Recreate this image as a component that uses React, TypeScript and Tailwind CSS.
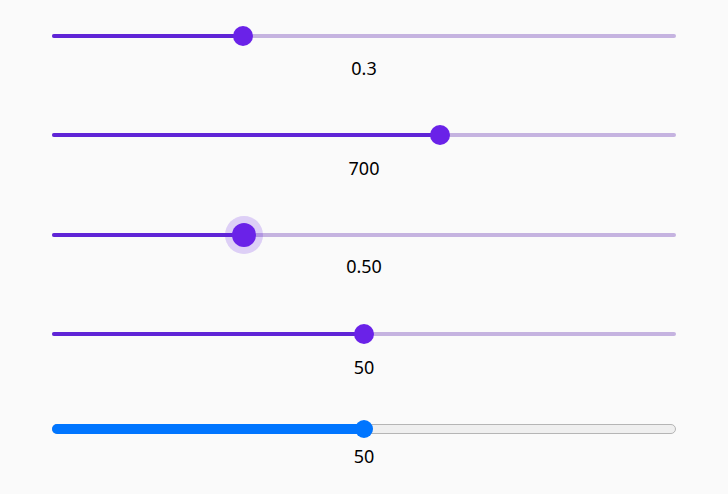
import React from "react";

type SliderProps = {
  pct: number; // 0..1
  thumb: number;
  halo?: boolean;
};

// purple material-like slider
function PurpleSlider({ pct, thumb, halo }: SliderProps) {
  const left = `calc(${thumb / 2}px + (100% - ${thumb}px) * ${pct})`;
  return (
    <div className="relative h-6 w-full">
      <div className="absolute left-0 right-0 top-1/2 -translate-y-1/2 h-[4px] rounded-full bg-[#c5b3e0]" />
      <div
        className="absolute left-0 top-1/2 -translate-y-1/2 h-[4px] rounded-full bg-[#5f24d6]"
        style={{ width: left }}
      />
      <div
        className="absolute top-1/2 -translate-x-1/2 -translate-y-1/2 flex items-center justify-center"
        style={{ left }}
      >
        {halo && <div className="absolute w-[38px] h-[38px] rounded-full bg-[#6a22e8]/20" />}
        <div
          className="relative rounded-full bg-[#6a22e8]"
          style={{ width: thumb, height: thumb }}
        />
      </div>
    </div>
  );
}

function NativeSlider({ pct }: { pct: number }) {
  const left = `calc(9px + (100% - 18px) * ${pct})`;
  return (
    <div className="relative h-6 w-full">
      <div className="absolute left-0 right-0 top-1/2 -translate-y-1/2 h-[10px] rounded-full bg-[#efefef] border border-[#b5b5b5]" />
      <div
        className="absolute left-0 top-1/2 -translate-y-1/2 h-[10px] rounded-full bg-[#0075ff]"
        style={{ width: left }}
      />
      <div
        className="absolute top-1/2 -translate-x-1/2 -translate-y-1/2 w-[18px] h-[18px] rounded-full bg-[#0075ff]"
        style={{ left }}
      />
    </div>
  );
}

function Label({ text, className }: { text: string; className: string }) {
  return (
    <div className={"text-center text-[18px] leading-6 text-black " + className}>{text}</div>
  );
}

export default function App() {
  return (
    <div
      className="w-[728px] h-[494px] bg-[#fafafa] px-[52px] pt-[24px] overflow-hidden"
      style={{ fontFamily: '"Noto Sans", "Open Sans", sans-serif' }}
    >
      <PurpleSlider pct={0.3} thumb={20} />
      <Label text="0.3" className="mt-[8px]" />

      <div className="mt-[43px]">
        <PurpleSlider pct={0.625} thumb={20} />
      </div>
      <Label text="700" className="mt-[9px]" />

      <div className="mt-[43px]">
        <PurpleSlider pct={0.3} thumb={24} halo />
      </div>
      <Label text="0.50" className="mt-[7px]" />

      <div className="mt-[44px]">
        <PurpleSlider pct={0.5} thumb={20} />
      </div>
      <Label text="50" className="mt-[9px]" />

      <div className="mt-[38px]">
        <NativeSlider pct={0.5} />
      </div>
      <Label text="50" className="mt-[3px]" />
    </div>
  );
}
